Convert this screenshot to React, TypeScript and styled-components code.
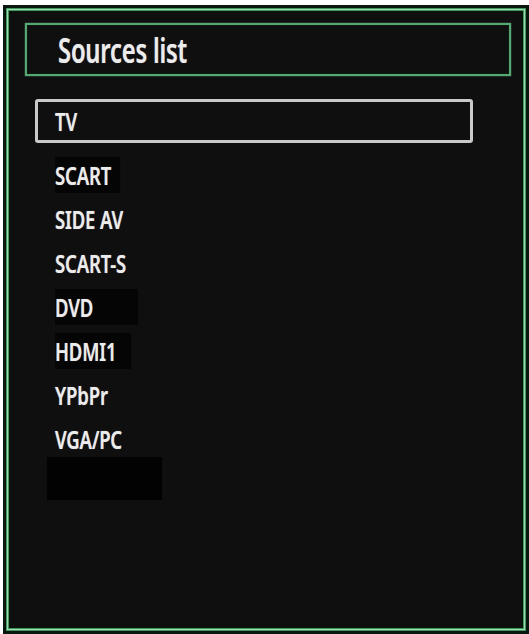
import React from 'react';
import styled, { createGlobalStyle } from 'styled-components';

const GlobalStyle = createGlobalStyle`
  html, body {
    margin: 0;
    padding: 0;
    background: #ffffff;
  }
`;

const Screen = styled.div`
  padding: 5px 0 0 3px;
  width: 529px;
  height: 634px;
  box-sizing: border-box;
  background: #ffffff;
`;

// outer frame: dark rim with a double-toned green line just inside it
const Panel = styled.div`
  width: 526px;
  height: 629px;
  box-sizing: border-box;
  border: 3px solid #0a170e;
  background: #0f0f0f;
  box-shadow:
    inset 0 0 0 1px #44985f,
    inset 0 0 0 2px #9adcb2,
    inset 0 0 0 3px #46985f,
    inset 0 0 0 5px #0a140d;
  padding: 15px 15px 0 19px;
  display: flex;
  flex-direction: column;
  font-family: "Noto Sans", "DejaVu Sans", sans-serif;
  font-weight: 600;
  color: #ececec;
`;

const Header = styled.div`
  height: 53px;
  box-sizing: border-box;
  border: 2px solid #55a872;
  box-shadow: inset 0 0 0 1px #0c1a11, 0 0 1px #7fcb9a;
  display: flex;
  align-items: center;
  padding-left: 31px;
`;

// the OSD typeface is a tall condensed face, so the glyphs are narrowed
const Title = styled.h1`
  margin: 0;
  font-size: 35px;
  font-weight: 600;
  letter-spacing: -0.3px;
  white-space: nowrap;
  transform: scaleX(0.68);
  transform-origin: left center;
  text-shadow: 0 0 1px rgba(255, 255, 255, 0.5);
`;

const List = styled.ul`
  list-style: none;
  margin: 23px 0 0 10px;
  padding: 0;
  display: flex;
  flex-direction: column;
`;

const Item = styled.li<{ $selected?: boolean }>`
  box-sizing: border-box;
  height: 44px;
  display: flex;
  align-items: center;
  width: ${p => (p.$selected ? '438px' : 'auto')};
  padding-left: ${p => (p.$selected ? '17px' : '20px')};
  border: ${p => (p.$selected ? '3px solid #cacaca' : 'none')};
  border-radius: ${p => (p.$selected ? '3px' : '0')};
  margin-bottom: ${p => (p.$selected ? '10px' : '0')};
`;

const Label = styled.span<{ $shade?: number }>`
  display: inline-block;
  font-size: 25px;
  letter-spacing: -0.2px;
  line-height: 36px;
  white-space: nowrap;
  transform: scaleX(0.74);
  transform-origin: left center;
  text-shadow: 0 0 1px rgba(255, 255, 255, 0.5);
  padding-right: ${p => (p.$shade ? `${p.$shade}px` : '0')};
  background: ${p => (p.$shade ? '#050505' : 'transparent')};
`;

// an unused input slot, drawn as a black patch
const EmptySlot = styled.li`
  width: 115px;
  height: 43px;
  margin: -4px 0 0 12px;
  background: #020202;
`;

const sources: { name: string; shade?: number }[] = [
  { name: 'TV' },
  { name: 'SCART', shade: 12 },
  { name: 'SIDE AV' },
  { name: 'SCART-S' },
  { name: 'DVD', shade: 60 },
  { name: 'HDMI1', shade: 20 },
  { name: 'YPbPr' },
  { name: 'VGA/PC' },
];

const App = () => {
  const selected = 'TV';

  return (
    <Screen>
      <GlobalStyle />
      <Panel>
        <Header>
          <Title>Sources list</Title>
        </Header>
        <List>
          {sources.map(source => (
            <Item key={source.name} $selected={source.name === selected}>
              <Label $shade={source.shade}>{source.name}</Label>
            </Item>
          ))}
          <EmptySlot />
        </List>
      </Panel>
    </Screen>
  );
};

export default App;
